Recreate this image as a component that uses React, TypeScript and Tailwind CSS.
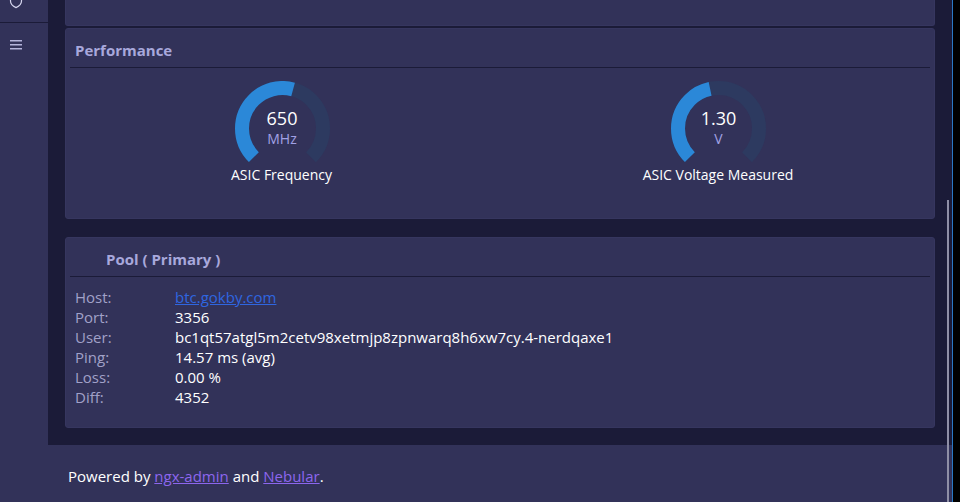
type GaugeProps = {
  value: string;
  unit: string;
  label: string;
  percent: number;
};

const ARC_LENGTH = 2 * Math.PI * 40.5 * 0.75;

function Gauge({ value, unit, label, percent }: GaugeProps) {
  return (
    <div className="flex flex-col items-center pt-[13px]">
      <div className="relative h-[95px] w-[95px]">
        <svg width="95" height="95" viewBox="0 0 95 95" className="block">
          <g transform="rotate(135 47.5 47.5)" fill="none" strokeWidth="14">
            <circle
              cx="47.5"
              cy="47.5"
              r="40.5"
              stroke="#2d3a60"
              strokeDasharray={`${ARC_LENGTH} 1000`}
            />
            <circle
              cx="47.5"
              cy="47.5"
              r="40.5"
              stroke="#2b88d8"
              strokeDasharray={`${ARC_LENGTH * percent} 1000`}
            />
          </g>
        </svg>
        <div className="absolute inset-0 flex flex-col items-center pt-[25px]">
          <span className="text-[18px] leading-[24px] text-white">{value}</span>
          <span className="text-[14px] leading-[18px] text-[#a1a1e5]">{unit}</span>
        </div>
      </div>
      <div className="-mt-[11px] -ml-[1px] text-[14px] leading-[20px] text-white">{label}</div>
    </div>
  );
}

const poolRows = [
  { label: "Port:", value: "3356" },
  { label: "User:", value: "bc1qt57atgl5m2cetv98xetmjp8zpnwarq8h6xw7cy.4-nerdqaxe1" },
  { label: "Ping:", value: "14.57 ms (avg)" },
  { label: "Loss:", value: "0.00 %" },
  { label: "Diff:", value: "4352" },
];

export default function App() {
  return (
    <div className="relative flex h-[502px] w-[960px] overflow-hidden bg-black font-['Open_Sans',sans-serif] text-[15px]">
      {/* Sidebar */}
      <aside className="h-full w-[48px] shrink-0 bg-[#323259]">
        <div className="h-[23px] overflow-hidden border-b border-[#1b1b38] pl-[9px]">
          <svg width="14" height="9" viewBox="0 0 14 9" className="block" fill="none" stroke="#d5d5ee" strokeWidth="1.2">
            <path d="M1.5 0 V1 C1.5 4 4.5 6.5 7 7.6 C9.5 6.5 12.5 4 12.5 1 V0" />
          </svg>
        </div>
        <div className="pl-[10px] pt-[17px]">
          <svg width="12" height="10" viewBox="0 0 12 10" className="block" fill="#b4b4db">
            <rect y="0" width="12" height="1.5" />
            <rect y="4" width="12" height="1.5" />
            <rect y="8" width="12" height="1.5" />
          </svg>
        </div>
      </aside>

      {/* Main column */}
      <div className="flex h-full w-[905px] shrink-0 flex-col border-r border-[#2b78c4]">
        <main className="flex h-[445px] shrink-0 flex-col bg-[#1b1b38] pl-[17px] pr-[17px]">
          <div className="h-[26px] w-[870px] shrink-0 rounded-b-[3px] border-x border-b border-[#36365f] bg-[#323259]" />

          <section className="mt-[2px] h-[191px] w-[870px] shrink-0 rounded-[3px] border border-[#36365f] bg-[#323259] px-[4px]">
            <h2 className="flex h-[39px] items-center border-b border-[#1b1b38] pl-[5px] pt-[5px] text-[15px] font-bold text-[#a8a8dc]">
              Performance
            </h2>
            <div className="-mx-[5px] grid grid-cols-[434px_433px] gap-[3px]">
              <Gauge value="650" unit="MHz" label="ASIC Frequency" percent={0.555} />
              <Gauge value="1.30" unit="V" label="ASIC Voltage Measured" percent={0.455} />
            </div>
          </section>

          <section className="mt-[18px] h-[191px] w-[870px] shrink-0 rounded-[3px] border border-[#36365f] bg-[#323259] px-[4px]">
            <h2 className="flex h-[39px] items-center border-b border-[#1b1b38] pl-[36px] pt-[5px] text-[15px] font-bold text-[#a8a8dc]">
              Pool ( Primary )
            </h2>
            <div className="pl-[5px] pt-[10px] leading-[20px]">
              <div className="flex">
                <span className="w-[100px] text-[#a1a1c8]">Host:</span>
                <a href="#" className="text-[#2f66e0] underline">
                  btc.gokby.com
                </a>
              </div>
              {poolRows.map((row) => (
                <div key={row.label} className="flex">
                  <span className="w-[100px] text-[#a1a1c8]">{row.label}</span>
                  <span className="text-white">{row.value}</span>
                </div>
              ))}
            </div>
          </section>
        </main>

        <footer className="flex flex-1 items-center bg-[#323259] pl-[20px] pt-[6px] text-white">
          <span>
            Powered by{" "}
            <a href="#" className="text-[#8c66ee] underline">
              ngx-admin
            </a>{" "}
            and{" "}
            <a href="#" className="text-[#8c66ee] underline">
              Nebular
            </a>
            .
          </span>
        </footer>
      </div>

      {/* Overlay scrollbar thumb */}
      <div className="absolute bottom-0 left-[947px] top-[200px] w-[2px] bg-[#8f8fa6]" />
    </div>
  );
}
